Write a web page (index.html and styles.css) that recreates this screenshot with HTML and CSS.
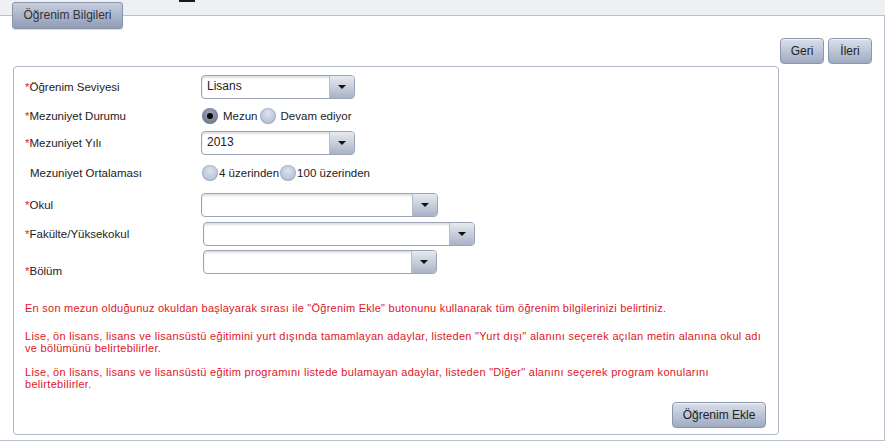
FILE: index.html
```html
<!DOCTYPE html>
<html lang="tr">
<head>
  <meta charset="UTF-8">
  <meta name="viewport" content="width=device-width, initial-scale=1.0">
  <link rel="stylesheet" href="styles.css">
  <title>Öğrenim Bilgileri</title>
</head>
<body>
  <div class="page">
    <div class="topbar">
      <span class="mark"></span>
      <div class="tab">Öğrenim Bilgileri</div>
    </div>
    <div class="main">
      <div class="nav">
        <button class="btn btn-geri">Geri</button>
        <button class="btn btn-ileri">İleri</button>
      </div>
      <div class="panel">
        <div class="row row-1">
          <div class="label"><span class="req">*</span>Öğrenim Seviyesi</div>
          <div class="select w-154"><span class="value">Lisans</span><span class="arrow"></span></div>
        </div>
        <div class="row row-2">
          <div class="label"><span class="req">*</span>Mezuniyet Durumu</div>
          <div class="radios">
            <span class="radio checked"></span><span class="rlabel">Mezun</span>
            <span class="radio"></span><span class="rlabel">Devam ediyor</span>
          </div>
        </div>
        <div class="row row-3">
          <div class="label"><span class="req">*</span>Mezuniyet Yılı</div>
          <div class="select w-154"><span class="value">2013</span><span class="arrow"></span></div>
        </div>
        <div class="row row-4">
          <div class="label indent">Mezuniyet Ortalaması</div>
          <div class="radios tight">
            <span class="radio"></span><span class="rlabel">4 üzerinden</span>
            <span class="radio"></span><span class="rlabel">100 üzerinden</span>
          </div>
        </div>
        <div class="row row-5">
          <div class="label"><span class="req">*</span>Okul</div>
          <div class="select w-237"><span class="value"></span><span class="arrow"></span></div>
        </div>
        <div class="row row-6">
          <div class="label"><span class="req">*</span>Fakülte/Yüksekokul</div>
          <div class="select w-272 shift"><span class="value"></span><span class="arrow"></span></div>
        </div>
        <div class="row row-7">
          <div class="label low"><span class="req">*</span>Bölüm</div>
          <div class="select w-234 shift"><span class="value"></span><span class="arrow"></span></div>
        </div>

        <div class="notes">
          <p class="note-1">En son mezun olduğunuz okuldan başlayarak sırası ile "Öğrenim Ekle" butonunu kullanarak tüm öğrenim bilgilerinizi belirtiniz.</p>
          <p class="note-2">Lise, ön lisans, lisans ve lisansüstü eğitimini yurt dışında tamamlayan adaylar, listeden "Yurt dışı" alanını seçerek açılan metin alanına okul adı ve bölümünü belirtebilirler.</p>
          <p class="note-3">Lise, ön lisans, lisans ve lisansüstü eğitim programını listede bulamayan adaylar, listeden "Diğer" alanını seçerek program konularını belirtebilirler.</p>
        </div>

        <div class="actions">
          <button class="btn btn-ekle">Öğrenim Ekle</button>
        </div>
      </div>
    </div>
  </div>
</body>
</html>
```

FILE: styles.css
```css
body {
  margin: 0;
  background-color: #fff;
  font-family: "Liberation Sans", Arial, sans-serif;
  color: #222;
}

.page {
  width: 885px;
}

.topbar {
  position: relative;
  height: 15px;
  background-color: #eef0f3;
  border-bottom: 1px solid #b9c3cd;
}

.mark {
  display: block;
  margin-left: 179px;
  width: 16px;
  height: 2px;
  background-color: #1a1a1a;
}

.tab {
  position: absolute;
  left: 12px;
  top: 2px;
  width: 109px;
  height: 25px;
  border: 1px solid #8a95ab;
  border-radius: 3px;
  background: linear-gradient(#c6cedf, #909cb6);
  box-shadow: 0 1px 1px rgba(0, 0, 0, 0.15);
  font-size: 12px;
  line-height: 25px;
  text-align: center;
  color: #333;
}

.main {
  height: 424px;
  border-right: 1px solid #b9c3cd;
  border-bottom: 1px solid #b9c3cd;
}

.nav {
  display: flex;
  justify-content: flex-end;
  padding: 22px 12px 0 0;
  gap: 4px;
}

.btn {
  height: 26px;
  padding: 0;
  border: 1px solid #8b96ab;
  border-radius: 4px;
  background: linear-gradient(#dae0eb, #a0abc2);
  box-shadow: inset 0 1px 0 rgba(255, 255, 255, 0.6);
  font-family: "Liberation Sans", Arial, sans-serif;
  font-size: 12px;
  color: #222;
}

.btn-geri {
  width: 44px;
}

.btn-ileri {
  width: 44px;
}

.panel {
  margin: 2px 0 0 13px;
  width: 753px;
  height: 367px;
  border: 1px solid #aeb7c3;
  border-radius: 4px;
  padding: 0 0 0 11px;
}

.row {
  display: flex;
  align-items: center;
}

.label {
  width: 176px;
  flex-shrink: 0;
  font-size: 11.5px;
}

.label.indent {
  padding-left: 5px;
  width: 171px;
}

.label.low {
  align-self: flex-end;
  margin-bottom: -3px;
}

.req {
  color: #e02a2a;
}

.row-1 { margin-top: 8px; }
.row-2 { margin-top: 8px; height: 18px; }
.row-3 { margin-top: 6px; }
.row-4 { margin-top: 9px; height: 18px; }
.row-5 { margin-top: 11px; }
.row-6 { margin-top: 5px; }
.row-7 { margin-top: 4px; }

.select {
  display: flex;
  height: 22px;
  border: 1px solid #9ba4b6;
  border-radius: 4px;
  background-color: #fff;
  box-shadow: inset 0 2px 2px rgba(0, 0, 0, 0.12);
  overflow: hidden;
}

.select.shift {
  margin-left: 2px;
}

.w-154 { width: 152px; }
.w-237 { width: 235px; }
.w-272 { width: 270px; }
.w-234 { width: 232px; }

.value {
  flex-grow: 1;
  padding-left: 5px;
  font-size: 12px;
  line-height: 21px;
}

.arrow {
  position: relative;
  width: 24px;
  border-left: 1px solid #b3bccb;
  background: linear-gradient(#e6eaf1, #a9b3c7);
}

.arrow::after {
  content: "";
  position: absolute;
  left: 8px;
  top: 9px;
  border-top: 4px solid #111;
  border-left: 4px solid transparent;
  border-right: 4px solid transparent;
}

.radios {
  display: flex;
  align-items: center;
  font-size: 11.5px;
  padding-left: 1px;
}

.radio {
  width: 16px;
  height: 16px;
  border-radius: 50%;
  background: radial-gradient(circle at 50% 35%, #dde4ef, #a7b3ca);
  box-shadow: inset 0 0 0 1px rgba(120, 135, 160, 0.35);
  position: relative;
}

.radio.checked {
  background: radial-gradient(circle at 50% 35%, #a0a9bb, #5f6a80);
}

.radio.checked::after {
  content: "";
  position: absolute;
  left: 5px;
  top: 5px;
  width: 6px;
  height: 6px;
  border-radius: 50%;
  background-color: #050505;
}

.rlabel {
  margin: 0 2px 0 5px;
}

.radios.tight .rlabel {
  margin: 0 1px 0 1px;
}

.notes {
  margin-top: 28px;
  width: 745px;
  color: #e0161e;
  font-size: 11px;
  line-height: 12px;
}

.notes p {
  margin: 0 0 12px 0;
}

.notes .note-1 {
  margin-bottom: 16px;
  letter-spacing: 0.25px;
}

.notes .note-2 {
  letter-spacing: 0.3px;
}

.notes .note-3 {
  letter-spacing: 0.3px;
}

.actions {
  display: flex;
  justify-content: flex-end;
  padding-right: 12px;
  margin-top: 3px;
}

.btn-ekle {
  width: 94px;
  height: 26px;
}
```
